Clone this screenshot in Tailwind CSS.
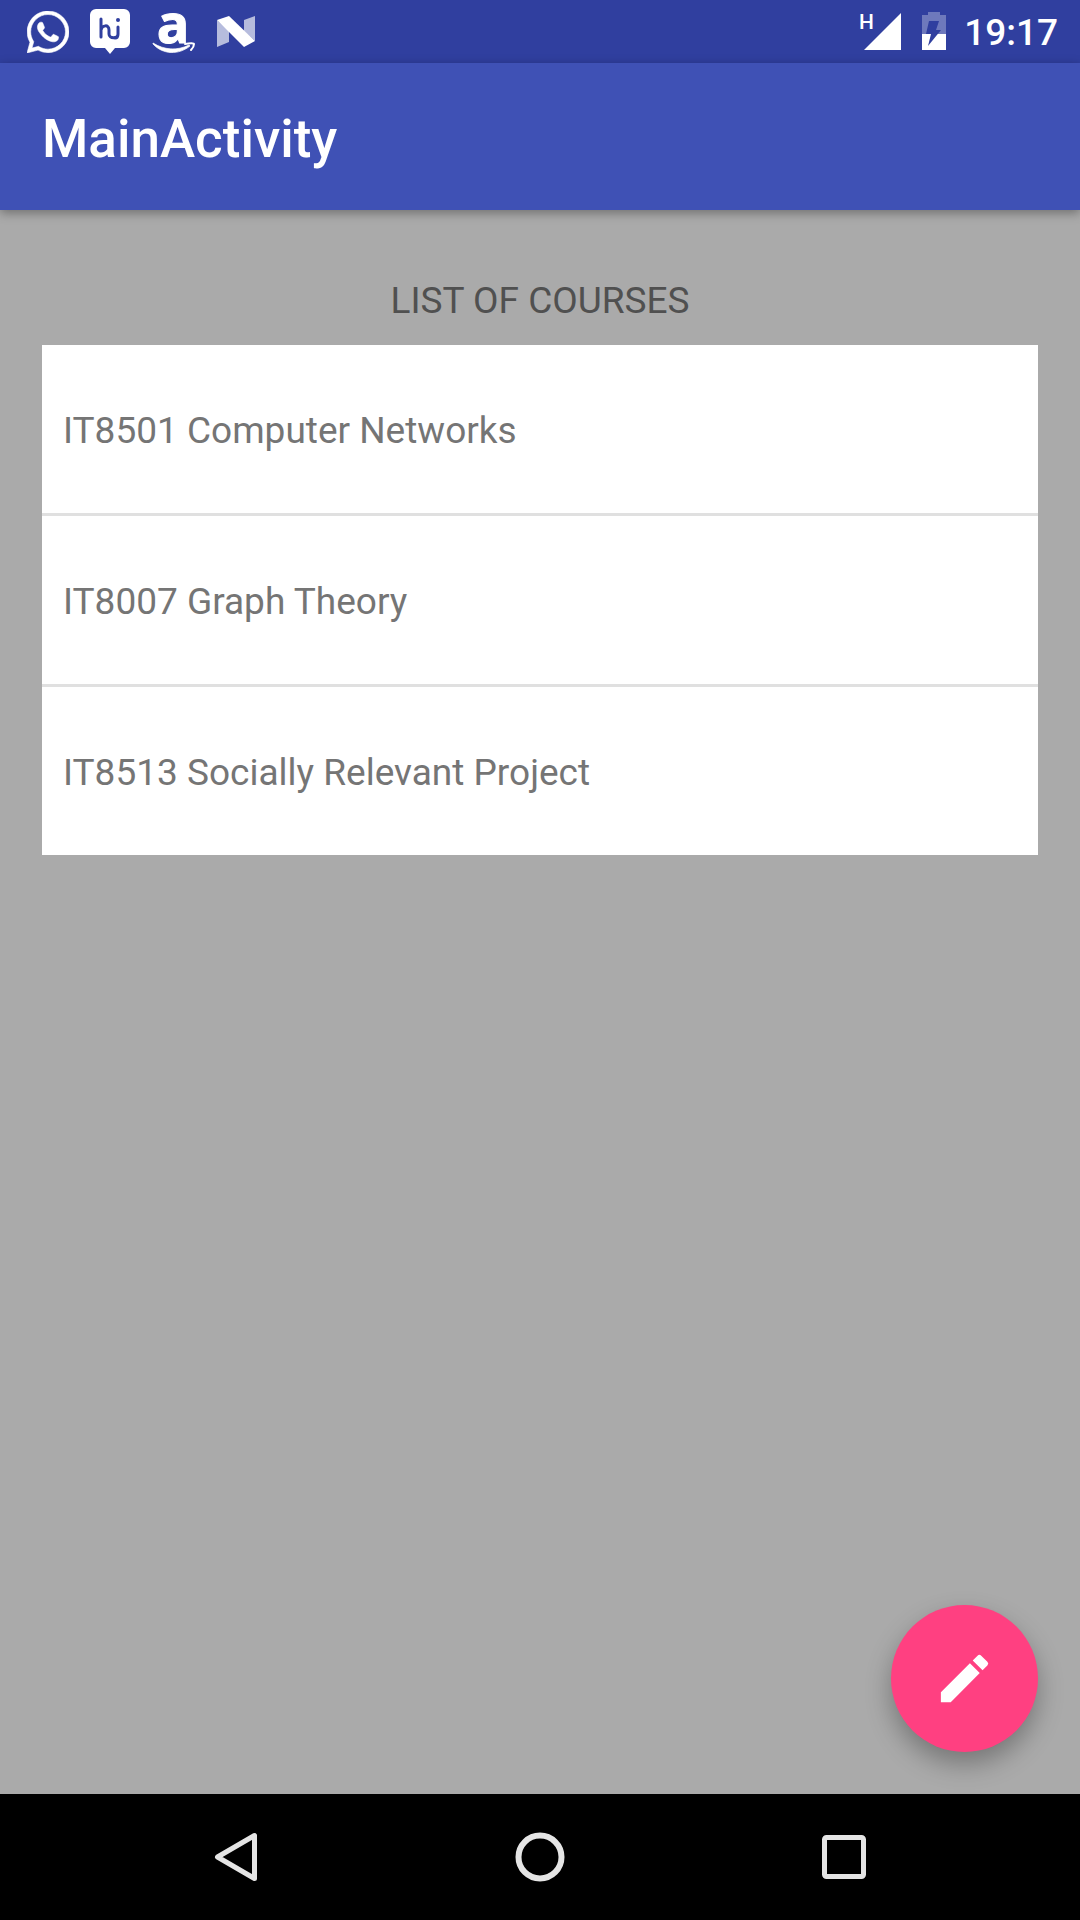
<!DOCTYPE html>
<html lang="en">
<head>
<meta charset="utf-8">
<meta name="viewport" content="width=device-width, initial-scale=1">
<title>MainActivity</title>
<script src="https://cdn.jsdelivr.net/npm/@tailwindcss/browser@4"></script>
</head>
<body class="flex min-h-screen flex-col bg-[#aaaaaa] font-['Roboto',sans-serif]">

  <!-- Status bar -->
  <div class="flex h-[63px] items-center justify-between bg-[#303f9f] pr-[22px] pl-4 text-white">
    <div class="flex">
      <svg class="size-[63px]" viewBox="0 0 63 63" fill="currentColor" aria-label="WhatsApp">
        <svg x="11" y="11" width="42" height="42" viewBox="0 32 448 448"><path stroke="#fff" stroke-width="6" d="M380.9 97.1C339 55.1 283.2 32 223.9 32c-122.4 0-222 99.6-222 222 0 39.1 10.2 77.3 29.6 111L0 480l117.7-30.9c32.4 17.7 68.9 27 106.1 27h.1c122.3 0 224.1-99.6 224.1-222 0-59.3-25.2-115-67.1-157zm-157 341.6c-33.2 0-65.7-8.9-94-25.7l-6.7-4-69.8 18.3L72 359.2l-4.4-7c-18.5-29.4-28.2-63.3-28.2-98.2 0-101.7 82.8-184.5 184.6-184.5 49.3 0 95.6 19.2 130.4 54.1 34.8 34.9 56.2 81.2 56.1 130.5 0 101.8-84.9 184.6-186.6 184.6zm101.2-138.2c-5.5-2.8-32.8-16.2-37.9-18-5.1-1.9-8.8-2.8-12.5 2.8-3.7 5.6-14.3 18-17.6 21.8-3.2 3.7-6.5 4.2-12 1.4-32.6-16.3-54-29.1-75.5-66-5.7-9.8 5.7-9.1 16.3-30.3 1.8-3.7.9-6.9-.5-9.7-1.4-2.8-12.5-30.1-17.1-41.2-4.5-10.8-9.1-9.3-12.5-9.5-3.2-.2-6.9-.2-10.6-.2-3.7 0-9.7 1.4-14.8 6.9-5.1 5.6-19.4 19-19.4 46.3 0 27.3 19.9 53.7 22.6 57.4 2.8 3.7 39.1 59.7 94.8 83.8 35.2 15.2 49 16.5 66.6 13.9 10.7-1.6 32.8-13.4 37.4-26.4 4.6-13 4.6-24.1 3.2-26.4-1.3-2.5-5-3.9-10.5-6.6z"/></svg>
      </svg>
      <svg class="size-[63px]" viewBox="0 0 63 63" fill="none" aria-label="Hike">
        <path fill="#fff" d="M17 9h28a6 6 0 0 1 6 6v27a6 6 0 0 1-6 6h-9l-5 6-5-6h-9a6 6 0 0 1-6-6V15a6 6 0 0 1 6-6z"/>
        <g stroke="#303f9f" stroke-width="3" stroke-linecap="round">
          <path d="M22 19v18M22 30c1-5 8-6 8 0v4c0 5 9 5 9 0v-7M39 27v7c0 2-1 4-3 4"/>
        </g>
        <circle cx="39" cy="20" r="2" fill="#303f9f"/>
      </svg>
      <svg class="size-[63px] overflow-visible" viewBox="0 0 63 63" fill="none" aria-label="Amazon">
        <text x="31" y="43" text-anchor="middle" fill="#fff" stroke="#fff" stroke-width="1" class="font-['Open_Sans',sans-serif] text-[54px] font-bold">a</text>
        <path fill="#fff" d="M11 43c11 7 24 8 36 2l1 1c-11 9-27 9-37-2z" stroke="#fff" stroke-width=".7"/>
        <path stroke="#fff" stroke-width="2" stroke-linecap="round" stroke-linejoin="round" d="M43 44c5-1 9-1 9 0s-1 4-3 6"/>
      </svg>
      <svg class="size-[63px]" viewBox="0 0 63 63" fill="#fff" aria-label="Android Nougat">
        <path fill-opacity=".65" d="M12 20l12 11v11l-12 5zM39 20l11-4v25L39 31z"/>
        <path d="M12 20l12-4 26 25-11 6z"/>
      </svg>
    </div>
    <div class="flex items-center">
      <svg class="h-[63px] w-[60px]" viewBox="0 0 60 63" aria-label="Mobile signal">
        <text x="9" y="29" fill="#fff" class="text-[21px] font-medium">H</text>
        <path fill="#fff" d="M51 13v37H14z"/>
      </svg>
      <svg class="h-[63px] w-[48px]" viewBox="0 0 48 63" aria-label="Battery charging">
        <path fill="#fff" fill-opacity=".3" d="M12 15h6v-3h12v3h6v19H12z"/>
        <path fill="#fff" d="M12 34h24v16H12z"/>
        <path fill="#303f9f" d="M19 21h10l-3 9h5L18 46l3-12h-5z"/>
      </svg>
      <span class="pt-[3px] pl-[6px] text-[37px] leading-[48px] font-medium">19:17</span>
    </div>
  </div>

  <!-- App bar -->
  <header class="z-10 flex h-[147px] items-center bg-[#3f51b5] px-[42px] pt-1 shadow-[0_3px_10px_rgba(0,0,0,0.35)]">
    <h1 class="text-[53px] leading-[64px] font-medium text-white">MainActivity</h1>
  </header>

  <main class="relative flex-1 px-[42px] pt-[67px]">
    <h2 class="pb-5 text-center text-[37px] leading-[48px] text-[#505050]">LIST OF COURSES</h2>
    <ul class="divide-y-3 divide-[#e0e0e0] bg-white text-[37px] leading-[48px] text-[#757575]">
      <li><a href="#" class="block px-[21px] pt-[62px] pb-[58px]">IT8501 Computer Networks</a></li>
      <li><a href="#" class="block px-[21px] pt-[62px] pb-[58px]">IT8007 Graph Theory</a></li>
      <li><a href="#" class="block px-[21px] pt-[62px] pb-[58px]">IT8513 Socially Relevant Project</a></li>
    </ul>

    <button type="button" aria-label="Edit" class="absolute right-[42px] bottom-[42px] flex size-[147px] items-center justify-center rounded-full bg-[#ff4081] shadow-[0_12px_26px_rgba(0,0,0,0.3)]">
      <svg class="size-[63px]" viewBox="0 0 24 24" fill="#fff"><path d="M3 17.25V21h3.75L17.81 9.94l-3.75-3.75L3 17.25zM20.71 7.04a1 1 0 0 0 0-1.41l-2.34-2.34a1 1 0 0 0-1.41 0l-1.83 1.83 3.75 3.75 1.83-1.83z"/></svg>
    </button>
  </main>

  <!-- System navigation -->
  <nav class="grid h-[126px] grid-cols-3 bg-black px-[84px]">
    <button type="button" aria-label="Back" class="flex items-center justify-center">
      <svg class="size-[60px]" viewBox="0 0 60 60" fill="none" stroke="#e5e5e5" stroke-width="5" stroke-linejoin="round"><path d="M48.500 8.500v43L11.500 30z"/></svg>
    </button>
    <button type="button" aria-label="Home" class="flex items-center justify-center">
      <svg class="size-[60px]" viewBox="0 0 60 60" fill="none" stroke="#e5e5e5" stroke-width="6"><circle cx="30" cy="30" r="21.500"/></svg>
    </button>
    <button type="button" aria-label="Recent apps" class="flex items-center justify-center">
      <svg class="size-[60px]" viewBox="0 0 60 60" fill="none" stroke="#e5e5e5" stroke-width="5"><rect x="10.500" y="10.500" width="39" height="39" rx="2"/></svg>
    </button>
  </nav>
</body>
</html>
